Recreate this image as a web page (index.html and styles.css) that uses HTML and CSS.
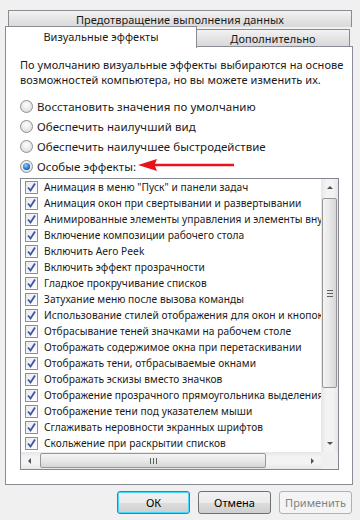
FILE: index.html
```html
<!DOCTYPE html>
<html>
<head>
  <meta charset="utf-8">
  <title>Параметры быстродействия</title>
  <link rel="stylesheet" href="styles.css">
</head>
<body>
  <div class="dialog">
    <div class="tab-back">Предотвращение выполнения данных</div>
    <div class="tab-row">
      <div class="tab tab-active">Визуальные эффекты</div>
      <div class="tab">Дополнительно</div>
    </div>

    <div class="panel">
      <p class="intro">По умолчанию визуальные эффекты выбираются на основе<br>возможностей компьютера, но вы можете изменить их.</p>

      <div class="radios">
        <label class="radio-row"><span class="radio"></span>Восстановить значения по умолчанию</label>
        <label class="radio-row"><span class="radio"></span>Обеспечить наилучший вид</label>
        <label class="radio-row"><span class="radio"></span>Обеспечить наилучшее быстродействие</label>
        <label class="radio-row">
          <span class="radio radio-on"></span>Особые эффекты:
          <svg class="red-arrow" width="96" height="14" viewBox="0 0 96 14">
            <path d="M0 7 L19 1 L17 5.8 L96 5.8 L96 8.2 L17 8.2 L19 13 Z" fill="#e8141c"/>
          </svg>
        </label>
      </div>

      <div class="listbox">
        <div class="list-items">
          <div class="item"><span class="check"></span>Анимация в меню "Пуск" и панели задач</div>
          <div class="item"><span class="check"></span>Анимация окон при свертывании и развертывании</div>
          <div class="item"><span class="check"></span>Анимированные элементы управления и элементы внутри окна</div>
          <div class="item"><span class="check"></span>Включение композиции рабочего стола</div>
          <div class="item"><span class="check"></span>Включить Aero Peek</div>
          <div class="item"><span class="check"></span>Включить эффект прозрачности</div>
          <div class="item"><span class="check"></span>Гладкое прокручивание списков</div>
          <div class="item"><span class="check"></span>Затухание меню после вызова команды</div>
          <div class="item"><span class="check"></span>Использование стилей отображения для окон и кнопок</div>
          <div class="item"><span class="check"></span>Отбрасывание теней значками на рабочем столе</div>
          <div class="item"><span class="check"></span>Отображать содержимое окна при перетаскивании</div>
          <div class="item"><span class="check"></span>Отображать тени, отбрасываемые окнами</div>
          <div class="item"><span class="check"></span>Отображать эскизы вместо значков</div>
          <div class="item"><span class="check"></span>Отображение прозрачного прямоугольника выделения</div>
          <div class="item"><span class="check"></span>Отображение тени под указателем мыши</div>
          <div class="item"><span class="check"></span>Сглаживать неровности экранных шрифтов</div>
          <div class="item"><span class="check"></span>Скольжение при раскрытии списков</div>
        </div>

        <div class="vscroll">
          <div class="sb-btn"><span class="arr arr-up"></span></div>
          <div class="sb-track">
            <div class="thumb thumb-v"><span class="grip-v"></span></div>
          </div>
          <div class="sb-btn"><span class="arr arr-down"></span></div>
        </div>

        <div class="hscroll">
          <div class="sb-btn"><span class="arr arr-left"></span></div>
          <div class="sb-track sb-track-h">
            <div class="thumb thumb-h"><span class="grip-h"></span></div>
          </div>
          <div class="sb-btn"><span class="arr arr-right"></span></div>
        </div>
        <div class="corner"></div>
      </div>
    </div>

    <div class="buttons">
      <button class="btn btn-default">ОК</button>
      <button class="btn">Отмена</button>
      <button class="btn btn-disabled">Применить</button>
    </div>
  </div>
</body>
</html>
```

FILE: styles.css
```css
body {
  margin: 0;
  background-color: #f0f0f0;
  font-family: "Noto Sans", "Open Sans", sans-serif;
  font-size: 11px;
  letter-spacing: 0.05px;
  color: #1a1a1a;
}
.dialog {
  width: 360px;
  height: 520px;
  padding-top: 10px;
  box-sizing: border-box;
}
.tab-back {
  margin: 0 8px 0 8px;
  height: 16px;
  border: 1px solid #898c95;
  border-bottom: none;
  background: linear-gradient(#f3f3f3, #e4e4e4 50%, #d9d9d9);
  text-align: center;
  line-height: 17px;
  white-space: nowrap;
}
.tab-row {
  display: flex;
  margin-left: 5px;
  margin-top: -1px;
  height: 20px;
  position: relative;
  z-index: 2;
}
.tab {
  height: 16px;
  margin-top: 3px;
  width: 152px;
  border: 1px solid #898c95;
  border-bottom: none;
  border-left: none;
  background: linear-gradient(#f3f3f3, #e4e4e4 50%, #d9d9d9);
  text-align: center;
  line-height: 18px;
  white-space: nowrap;
}
.tab-active {
  width: 190px;
  height: 21px;
  margin-top: 0;
  border-left: 1px solid #898c95;
  border-right: 1px solid #898c95;
  background: #fff;
  line-height: 19px;
}
.panel {
  margin-left: 5px;
  width: 348px;
  height: 439px;
  box-sizing: border-box;
  border: 1px solid #898c95;
  background-color: #fff;
  padding: 10px 0 0 14px;
}
.intro {
  margin: 0;
  line-height: 15px;
  white-space: nowrap;
}
.radios {
  margin-top: 9px;
  display: flex;
  flex-direction: column;
  font-size: 11.5px;
}
.radio-row {
  display: flex;
  align-items: center;
  height: 20px;
  white-space: nowrap;
}
.radio {
  width: 11px;
  height: 11px;
  border: 1px solid #8e8f8f;
  border-radius: 50%;
  background: radial-gradient(circle at 50% 35%, #fdfdfd, #e2e2e2 70%, #cfcfcf);
  margin-right: 4px;
  position: relative;
}
.radio-on::after {
  content: "";
  position: absolute;
  left: 2px;
  top: 2px;
  width: 7px;
  height: 7px;
  border-radius: 50%;
  background: radial-gradient(circle at 40% 35%, #8fd0ff, #1a6fd0 60%, #0d3f8f);
}
.red-arrow {
  margin-left: 2px;
  margin-top: -2px;
}
.listbox {
  margin-top: 2px;
  width: 319px;
  height: 292px;
  box-sizing: border-box;
  border: 1px solid #828790;
  display: grid;
  grid-template-columns: 1fr 17px;
  grid-template-rows: 1fr 17px;
  overflow: hidden;
}
.list-items {
  overflow: hidden;
  font-size: 10.2px;
}
.item {
  height: 16px;
  display: flex;
  align-items: center;
  white-space: nowrap;
  padding-left: 4px;
}
.check {
  flex: none;
  width: 11px;
  height: 11px;
  border: 1px solid #8e8f8f;
  margin-right: 6px;
  background:
    url("data:image/svg+xml,%3Csvg xmlns='http://www.w3.org/2000/svg' width='11' height='11'%3E%3Cpath d='M2 5.5 L4.5 8.5 L9 1.5' fill='none' stroke='%233a55a8' stroke-width='1.8'/%3E%3C/svg%3E") center no-repeat,
    linear-gradient(135deg, #e9e9e9, #fdfdfd);
}
.vscroll {
  display: flex;
  flex-direction: column;
  background: linear-gradient(90deg, #e6e6e6, #f3f3f3 30%, #f3f3f3 70%, #e6e6e6);
}
.hscroll {
  display: flex;
  background: linear-gradient(#e6e6e6, #f3f3f3 30%, #f3f3f3 70%, #e6e6e6);
}
.corner {
  background-color: #f0f0f0;
}
.sb-btn {
  flex: none;
  width: 17px;
  height: 17px;
  display: flex;
  align-items: center;
  justify-content: center;
}
.sb-track {
  flex: 1;
  padding: 2px 0 0 0;
}
.sb-track-h {
  padding: 0 0 0 2px;
}
.arr {
  width: 0;
  height: 0;
  border: 4px solid transparent;
}
.arr-up {
  border-bottom: 3px solid #505050;
  border-top-width: 0;
  border-left-width: 3px;
  border-right-width: 3px;
}
.arr-down {
  border-top: 3px solid #505050;
  border-bottom-width: 0;
  border-left-width: 3px;
  border-right-width: 3px;
}
.arr-left {
  border-right: 3px solid #505050;
  border-left-width: 0;
  border-top-width: 3px;
  border-bottom-width: 3px;
}
.arr-right {
  border-left: 3px solid #505050;
  border-right-width: 0;
  border-top-width: 3px;
  border-bottom-width: 3px;
}
.thumb {
  box-sizing: border-box;
  border: 1px solid #979797;
  border-radius: 2px;
  display: flex;
  align-items: center;
  justify-content: center;
}
.thumb-v {
  width: 15px;
  height: 190px;
  margin-left: 1px;
  background: linear-gradient(90deg, #f4f4f4, #e8e8e8 50%, #d6d6d6);
}
.thumb-h {
  width: 226px;
  height: 15px;
  margin-top: 1px;
  background: linear-gradient(#f4f4f4, #e8e8e8 50%, #d6d6d6);
}
.grip-v {
  width: 6px;
  height: 7px;
  background: repeating-linear-gradient(#606060 0 1px, transparent 1px 3px);
}
.grip-h {
  width: 7px;
  height: 6px;
  background: repeating-linear-gradient(90deg, #606060 0 1px, transparent 1px 3px);
}
.buttons {
  display: flex;
  justify-content: flex-end;
  gap: 8px;
  padding: 6px 8px 0 0;
}
.btn {
  width: 73px;
  height: 23px;
  border: 1px solid #707070;
  border-radius: 3px;
  background: linear-gradient(#f2f2f2, #ebebeb 50%, #dddddd 50%, #cfcfcf);
  font-family: inherit;
  font-size: 11px;
  color: #000;
  padding: 0;
}
.btn-default {
  border-color: #3c7fb1;
  box-shadow: inset 0 0 0 1px #48d8fb;
}
.btn-disabled {
  border-color: #adb2b5;
  background: #f4f4f4;
  color: #838383;
}
```
